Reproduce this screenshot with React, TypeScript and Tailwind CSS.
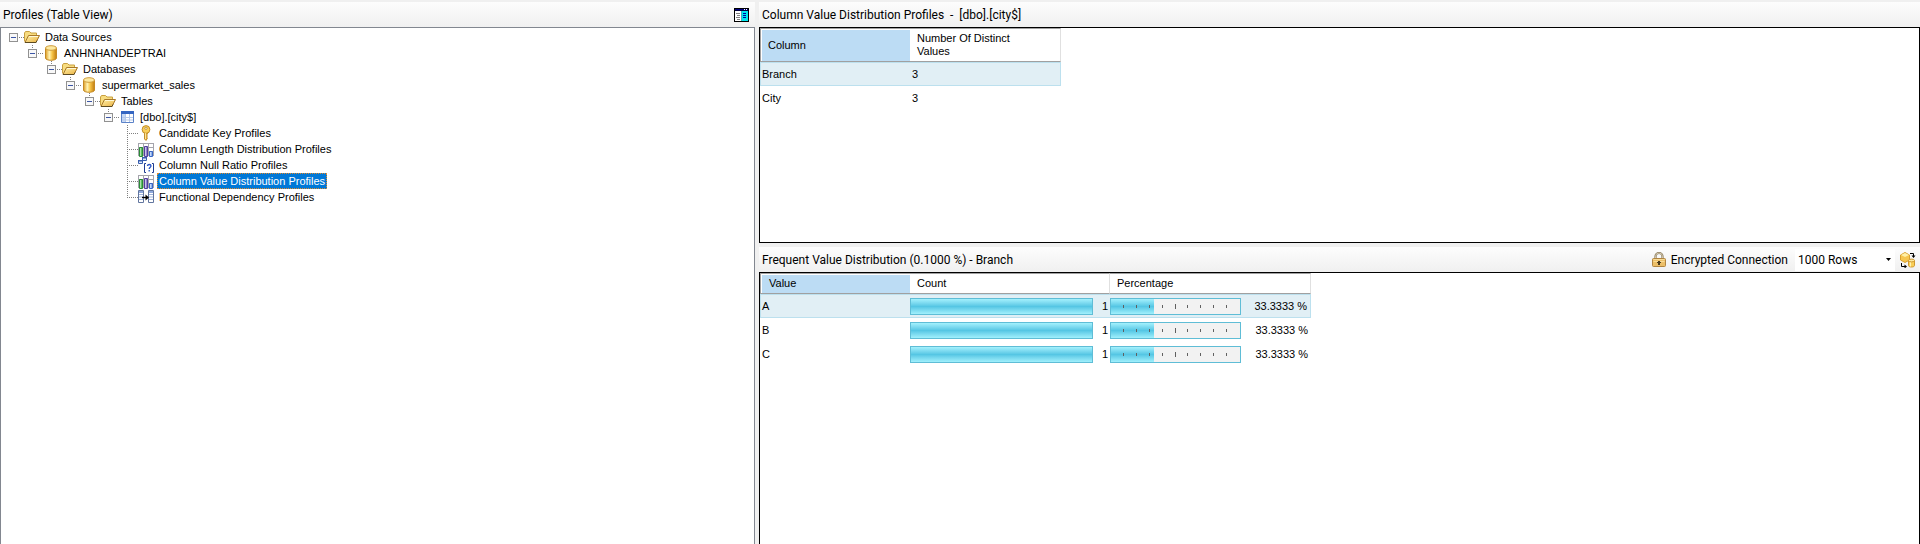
import React from "react";

type IconName = "folder" | "database" | "table" | "key" | "chart" | "nullRatio" | "dependency";

type TreeRow = { label: string; icon: IconName; depth: number; leaf?: boolean; last?: boolean; selected?: boolean };

const tree: TreeRow[] = [
  { label: "Data Sources", icon: "folder", depth: 0 },
  { label: "ANHNHANDEPTRAI", icon: "database", depth: 1 },
  { label: "Databases", icon: "folder", depth: 2 },
  { label: "supermarket_sales", icon: "database", depth: 3 },
  { label: "Tables", icon: "folder", depth: 4 },
  { label: "[dbo].[city$]", icon: "table", depth: 5 },
  { label: "Candidate Key Profiles", icon: "key", depth: 6, leaf: true },
  { label: "Column Length Distribution Profiles", icon: "chart", depth: 6, leaf: true },
  { label: "Column Null Ratio Profiles", icon: "nullRatio", depth: 6, leaf: true },
  { label: "Column Value Distribution Profiles", icon: "chart", depth: 6, leaf: true, selected: true },
  { label: "Functional Dependency Profiles", icon: "dependency", depth: 6, leaf: true, last: true },
];

const profiles = [
  { column: "Branch", distinct: 3 },
  { column: "City", distinct: 3 },
];

const frequencies = [
  { value: "A", count: 1, percent: 33.3333 },
  { value: "B", count: 1, percent: 33.3333 },
  { value: "C", count: 1, percent: 33.3333 },
];

function TreeIcon({ name }: { name: IconName }) {
  return (
    <svg className="h-4 w-4 shrink-0" viewBox="0 0 16 16" aria-hidden="true">
      <defs>
        <linearGradient id="gold" x1="0" x2="1" y1="0" y2="0">
          <stop offset="0" stopColor="#dc9a20" />
          <stop offset="0.35" stopColor="#fff3b4" />
          <stop offset="0.6" stopColor="#f8c648" />
          <stop offset="1" stopColor="#c07c10" />
        </linearGradient>
        <linearGradient id="flap" x1="0" x2="1" y1="0" y2="1">
          <stop offset="0" stopColor="#fff3ac" />
          <stop offset="1" stopColor="#eab040" />
        </linearGradient>
      </defs>
      {name === "folder" && (
        <>
          <path d="M.5 12.500V4l1-1.500h4L7 4h5.500v3" fill="#f7dc80" stroke="#c9a040" />
          <path d="M1 13.500 4.500 6.500h11L12 13.500z" fill="url(#flap)" stroke="#a8782a" />
          <path d="M1 13.500h11l1-2" fill="none" stroke="#5c4a20" />
          <path d="M5 7.500h9" stroke="#fff9d8" />
        </>
      )}
      {name === "database" && (
        <>
          <path d="M2.500 3v10c0 3 11 3 11 0V3" fill="url(#gold)" stroke="#c58a24" />
          <ellipse cx="8" cy="3" rx="5.500" ry="2.300" fill="#fde9a0" stroke="#cf9c3c" />
        </>
      )}
      {name === "table" && (
        <>
          <path d="M2.500 2.500h12v11h-12z" fill="#fff" stroke="#5b82c8" />
          <path d="M2 2h13v3H2z" fill="#3566c2" />
          <path d="M3 5h3.500v8H3z" fill="#c6d8f5" />
          <path d="M6.500 5v8M10.500 5v8M3 8.500h11M3 11h11" stroke="#b4c8ea" />
        </>
      )}
      {name === "key" && (
        <>
          <path d="M6.500 7h3v2l-1 1 1 1-1 1 1 1-1.500 2.500L6.500 14z" fill="#f2b93c" stroke="#b27812" strokeWidth=".8" />
          <circle cx="8" cy="4.500" r="3.900" fill="#f9cf5a" stroke="#bb8420" strokeWidth=".9" />
          <circle cx="8" cy="3.300" r="1.100" fill="#fff" stroke="#9a6a14" strokeWidth=".6" />
          <path d="M7.500 8v6" stroke="#fff0b0" strokeWidth=".8" />
        </>
      )}
      {name === "chart" && (
        <>
          <path d="M1 2h14v13H1z" fill="#fff" />
          <path d="M0 2.500h16M0 6.500h16M0 10.500h16M0 14.500h16M.5 2v13M5.500 2v13M10.500 2v13M15.500 2v13" stroke="#a4a4ac" />
          <path d="M1.500 6.500h3v9h-3z" fill="#5cc060" stroke="#2c8a38" />
          <path d="M6.500 5.500h3v10h-3z" fill="#9484d0" stroke="#50409c" />
          <path d="M11.500 10.500h3v5h-3z" fill="#8cb2f0" stroke="#3a66c4" />
          <path d="M2.500 7v8M7.500 6v9M12.500 11v4" stroke="#fff" strokeOpacity=".5" />
        </>
      )}
      {name === "nullRatio" && (
        <>
          <path d="M.5 3.500h4v3h-4zM4.500.500h4v3h-4z" fill="#dce8fb" stroke="#3a5fae" />
          <path d="M0 3h5v1.500H0zM4 0h5v1.500H4z" fill="#3a5fae" />
          <path d="M8 6.500H6.500v9H8M14 6.500h1.500v9H14" fill="none" stroke="#1f3d92" />
          <path d="M9.500 9c0-2 3.500-2 3.500 0 0 1.200-1.800 1.200-1.800 3M11.200 13v1.500" fill="none" stroke="#2a55c4" strokeWidth="1.300" />
        </>
      )}
      {name === "dependency" && (
        <>
          <path d="M.5 1.500h5v12h-5zM10.500 1.500h5v12h-5z" fill="#fff" stroke="#62769f" />
          <path d="M1 2h4v2H1zM11 2h4v2h-4z" fill="#8fa8dc" />
          <path d="M1 5.500h4M1 8h4M1 10.500h4M11 5.500h4M11 8h4M11 10.500h4" stroke="#9fb3dc" />
          <path d="M4 8.500h5" stroke="#000" strokeWidth="1.400" />
          <path d="M7.500 5.500 11 8.500l-3.500 3z" fill="#000" />
        </>
      )}
    </svg>
  );
}

function Connector({ row }: { row: TreeRow }) {
  if (row.leaf) {
    return (
      <svg className="h-4 w-[19px] shrink-0" viewBox="0 0 19 16" aria-hidden="true">
        <path d={row.last ? "M8.500 0V8" : "M8.500 0V16"} stroke="#808080" strokeDasharray="1 1" />
        <path d="M8 8.500H19" stroke="#808080" strokeDasharray="1 1" />
      </svg>
    );
  }
  return (
    <button type="button" aria-label={`Collapse ${row.label}`} className="h-4 w-[19px] shrink-0">
      <svg className="block h-4 w-[19px]" viewBox="0 0 19 16" aria-hidden="true">
        {row.depth > 0 && <path d="M8.500 0V4" stroke="#808080" strokeDasharray="1 1" />}
        <path d="M14 8.500H19" stroke="#808080" strokeDasharray="1 1" />
        <rect x="4.500" y="4.500" width="8" height="8" fill="#f8f8f8" stroke="#919191" />
        <path d="M6 8.500H11" stroke="#3c56a6" />
      </svg>
    </button>
  );
}

function Toolbar({ children }: { children: React.ReactNode }) {
  return (
    <header className="flex h-[25px] shrink-0 items-center bg-linear-to-b from-[#fdfdfd] to-[#f0f0f0] pl-[3px] font-['Roboto',sans-serif] text-[12px] leading-4 whitespace-nowrap">
      {children}
    </header>
  );
}

function PaneIcon() {
  return (
    <svg className="h-[14px] w-[15px]" viewBox="0 0 15 14" aria-hidden="true">
      <path d="M0 0h15v14H0z" fill="#000" />
      <path d="M1 1h13v1.500H1z" fill="#000080" />
      <path d="M10 1h1v1h-1zM12 1h1v1h-1z" fill="#fff" />
      <path d="M1 3h6.500v10H1z" fill="#fff" />
      <path d="M7.500 3H14v10H7.500z" fill="#00e8f0" />
      <path d="M2 5.500h4M3 7.500h3M2 9.500h4M3 11.500h3" stroke="#808080" />
      <path d="M9 5.500h3M9 7.500h3M9 9.500h3" stroke="#0000a0" />
    </svg>
  );
}

function LockIcon() {
  return (
    <svg className="h-[15px] w-[14px]" viewBox="0 0 14 15" aria-hidden="true">
      <path d="M3.500 7V4.500a3.500 3.500 0 0 1 7 0V7" fill="none" stroke="#8a7a5c" strokeWidth="2.200" />
      <path d="M3.500 7V4.500a3.500 3.500 0 0 1 7 0V7" fill="none" stroke="#e6dcc0" strokeWidth=".8" />
      <rect x=".5" y="6.500" width="13" height="8" rx="1" fill="#ecbf68" stroke="#b08440" />
      <path d="M1.500 7.500h11M1.500 9.500h11" stroke="#f8dc98" />
      <path d="M6 9h2v1h1v1H8v2H6v-2H5v-1h1z" fill="#4a3a1c" />
    </svg>
  );
}

function RefreshDataIcon() {
  return (
    <svg className="h-4 w-4" viewBox="0 0 16 16" aria-hidden="true">
      <path d="M.5 3 5 .500 9.500 3v5L5 10.500.500 8z" fill="#f6c650" stroke="#d8a030" />
      <path d="M1 3 5 1l4 2-4 2z" fill="#fff0a8" />
      <path d="M8.500 8.500v5c0 2 6 2 6 0v-5" fill="#f8ce58" stroke="#cf9830" />
      <path d="M10.500 9.500v5" stroke="#fff3b4" />
      <ellipse cx="11.500" cy="8.500" rx="3" ry="1.400" fill="#fdeaa0" stroke="#cf9830" />
      <path d="M10 1.500h3.500V4M1.500 11v3.500H5" fill="none" stroke="#000" />
      <path d="M11.500 3.500h4l-2 2.500zM4.500 12.500v4L7 14.500z" fill="#000" />
    </svg>
  );
}

function PercentBar({ percent }: { percent: number }) {
  return (
    <div className="flex h-[17px] w-[131px] border border-[#5fbdd6] bg-[#f2f2f2]">
      <svg className="h-[15px] w-full" viewBox="0 0 129 15" role="img" aria-label={`${percent} %`}>
        <defs>
          <linearGradient id="fill" x1="0" x2="0" y1="0" y2="1">
            <stop offset="0" stopColor="#a4f1fd" />
            <stop offset="0.5" stopColor="#55c6e4" />
            <stop offset="1" stopColor="#a0f0fc" />
          </linearGradient>
        </defs>
        <rect width={Math.round((129 * percent) / 100)} height="15" fill="url(#fill)" />
        {[12, 25, 38, 51, 64, 76, 89, 102, 115].map((x) => (
          <rect key={x} x={x} y={x === 64 ? 5 : 6} width="1" height={x === 64 ? 5 : 3} fill="#606060" />
        ))}
      </svg>
    </div>
  );
}

export default function App() {
  return (
    <main className="grid h-screen grid-cols-[755fr_1161fr] gap-x-1 overflow-hidden bg-[#f0f0f0] pt-0.5 font-['Liberation_Sans',sans-serif] text-[11px] leading-[13px] text-black">
      <section className="flex min-h-0 min-w-0 flex-col">
        <Toolbar>
          <h1>Profiles (Table View)</h1>
          <button type="button" aria-label="Toggle view" className="mr-1.5 ml-auto">
            <PaneIcon />
          </button>
        </Toolbar>
        <ul className="flex-1 border border-b-0 border-[#828790] bg-white pt-px pl-1">
          {tree.map((row) => (
            <li key={row.label} className="flex h-4 items-center whitespace-nowrap">
              {Array.from({ length: row.depth }, (_, i) => (
                <span key={i} className="w-[19px] shrink-0" />
              ))}
              <Connector row={row} />
              <TreeIcon name={row.icon} />
              <span
                className={
                  row.selected
                    ? "ml-[3px] h-4 border border-dotted border-[#e08a2c] bg-[#0078d7] px-px leading-[14px] text-white"
                    : "ml-[3px] h-4 border border-transparent px-px leading-[14px]"
                }
              >
                {row.label}
              </span>
            </li>
          ))}
        </ul>
      </section>

      <section className="flex min-h-0 min-w-0 flex-col">
        <Toolbar>
          <h2 className="whitespace-pre">Column Value Distribution Profiles  -  [dbo].[city$]</h2>
        </Toolbar>
        <div className="h-[216px] shrink-0 border border-black bg-white">
          <table className="w-[301px] table-fixed border-separate border-spacing-0 text-left">
            <colgroup>
              <col className="w-[150px]" />
              <col className="w-[151px]" />
            </colgroup>
            <thead>
              <tr className="h-[34px]">
                <th className="border-y border-l border-[#a0a0a0] bg-[#bcdcf4] pl-[7px] font-normal shadow-[inset_1px_1px_0_#ffffff]">Column</th>
                <th className="border-y border-r border-y-[#a0a0a0] border-r-[#e0e0e0] pr-10 pl-[7px] font-normal">Number Of Distinct Values</th>
              </tr>
            </thead>
            <tbody>
              {profiles.map((p, i) => (
                <tr key={p.column} className={i === 0 ? "h-6 bg-[#e1eff5]" : "h-6"}>
                  <td className={i === 0 ? "border-y border-l border-[#bce0ee] pl-px" : "pl-0.5"}>{p.column}</td>
                  <td className={i === 0 ? "border-y border-r border-[#bce0ee] pl-0.5" : "pl-0.5"}>{p.distinct}</td>
                </tr>
              ))}
            </tbody>
          </table>
        </div>

        <div className="mt-1 flex flex-col">
          <Toolbar>
            <h2>Frequent Value Distribution (0.1000 %) - Branch</h2>
            <div className="ml-auto flex items-center pr-1">
              <LockIcon />
              <span className="ml-[5px]">Encrypted Connection</span>
              <div className="relative ml-[7px] flex items-center">
                <select aria-label="Row limit" className="h-[22px] w-[100px] appearance-none bg-white pl-[3px] text-[12px]">
                  <option>1000 Rows</option>
                </select>
                <svg className="pointer-events-none absolute right-1 h-[3px] w-[5px]" viewBox="0 0 5 3" aria-hidden="true">
                  <path d="M0 0h5L2.500 3z" fill="#000" />
                </svg>
              </div>
              <button type="button" aria-label="Refresh data" className="ml-[5px]">
                <RefreshDataIcon />
              </button>
            </div>
          </Toolbar>
        </div>
        <div className="flex-1 border border-b-0 border-black bg-white">
          <table className="w-[551px] table-fixed border-separate border-spacing-0 text-left">
            <colgroup>
              <col className="w-[150px]" />
              <col className="w-[200px]" />
              <col className="w-[201px]" />
            </colgroup>
            <thead>
              <tr className="h-[21px]">
                <th className="border-y border-l border-[#a0a0a0] bg-[#bcdcf4] pl-2 font-normal shadow-[inset_1px_1px_0_#ffffff]">Value</th>
                <th className="border-y border-r border-y-[#a0a0a0] border-r-[#e0e0e0] pl-[7px] font-normal">Count</th>
                <th className="border-y border-r border-y-[#a0a0a0] border-r-[#e0e0e0] pl-[7px] font-normal">Percentage</th>
              </tr>
            </thead>
            <tbody>
              {frequencies.map((f, i) => (
                <tr key={f.value} className={i === 0 ? "h-6 bg-[#e1eff5]" : "h-6"}>
                  <td className={i === 0 ? "border-y border-l border-[#bce0ee] pl-px" : "pl-0.5"}>{f.value}</td>
                  <td className={i === 0 ? "border-y border-[#bce0ee]" : ""}>
                    <div className="flex items-center justify-between pr-0.5">
                      <div className="h-[17px] w-[183px] border border-[#5fbdd6] bg-linear-to-b from-[#a4f1fd] via-[#55c6e4] to-[#a0f0fc]" />
                      <span>{f.count}</span>
                    </div>
                  </td>
                  <td className={i === 0 ? "border-y border-r border-[#bce0ee]" : ""}>
                    <div className="flex items-center justify-between pr-[3px]">
                      <PercentBar percent={f.percent} />
                      <span>{f.percent} %</span>
                    </div>
                  </td>
                </tr>
              ))}
            </tbody>
          </table>
        </div>
      </section>
    </main>
  );
}
